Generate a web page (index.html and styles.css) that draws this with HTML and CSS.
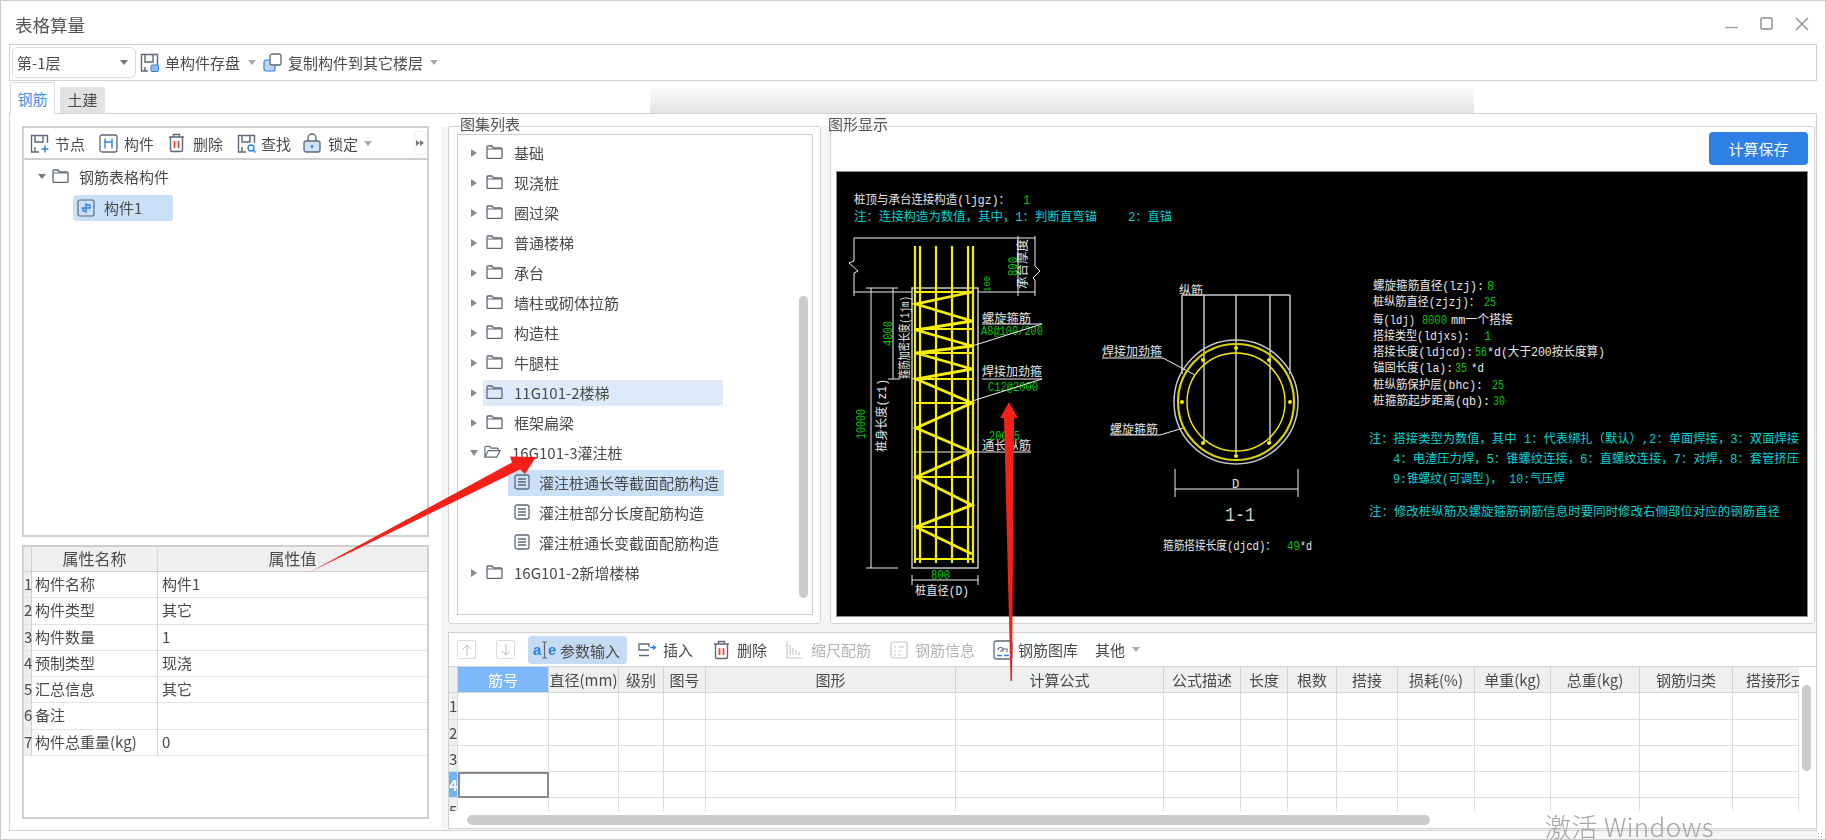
FILE: index.html
```html
<!DOCTYPE html>
<html lang="zh-CN">
<head>
<meta charset="utf-8">
<title>表格算量</title>
<link rel="stylesheet" href="styles.css">
</head>
<body>
<svg class="defs" width="0" height="0" aria-hidden="true">
  <symbol id="folder" viewBox="0 0 17 14"><path d="M1 3V2a1 1 0 0 1 1-1h4l1.5 2H15a1 1 0 0 1 1 1v8.500a1 1 0 0 1-1 1H2a1 1 0 0 1-1-1z" fill="none" stroke="#5f6877" stroke-width="1.300"/><path d="M1 4h15" stroke="#5f6877" stroke-width="1"/></symbol>
  <symbol id="folderopen" viewBox="0 0 18 14"><path d="M1 12.500V2a1 1 0 0 1 1-1h4l1.500 2H14a1 1 0 0 1 1 1v1.500M1 12.500h12.500L17 5.500H4.500z" fill="none" stroke="#5f6877" stroke-width="1.300"/></symbol>
  <symbol id="doc" viewBox="0 0 16 16"><rect x="1" y="1" width="14" height="14" rx="2" fill="none" stroke="#5f6877" stroke-width="1.300"/><path d="M4 5h8M4 8h8M4 11h8" stroke="#5f6877" stroke-width="1.300"/></symbol>
  <symbol id="trash" viewBox="0 0 17 20"><path d="M1 4h15M5.500 4V1.500h6V4M2.500 4v13a1.500 1.500 0 0 0 1.500 1.500h9a1.500 1.500 0 0 0 1.500-1.500V4" fill="none" stroke="#5f6877" stroke-width="1.400"/><path d="M6.500 8v7M10.500 8v7" stroke="#e8483f" stroke-width="1.800"/></symbol>
</svg>

<div class="win">
  <header class="title">
    <span class="title-text">表格算量</span>
    <div class="winbtns">
      <svg width="13" height="14" viewBox="0 0 13 14"><path d="M0 10.500h13" stroke="#9a9a9a" stroke-width="1.300"/></svg>
      <svg width="13" height="14" viewBox="0 0 13 14"><rect x="1" y="1" width="11" height="11" rx="1" fill="none" stroke="#8a8a8a" stroke-width="1.400"/></svg>
      <svg width="14" height="14" viewBox="0 0 14 14"><path d="M1 1l12 12M13 1L1 13" stroke="#8a8a8a" stroke-width="1.300"/></svg>
    </div>
  </header>

  <div class="topbar">
    <div class="combo"><span>第-1层</span><i class="caret dark"></i></div>
    <svg class="ico save" width="19" height="19" viewBox="0 0 19 19"><path d="M8 18H1.500V1.500h16V12M5 1.500V9h8V1.500M5 18v-4" fill="none" stroke="#5f6877" stroke-width="1.400"/><rect x="11" y="12" width="7.500" height="6.500" rx="1" fill="#8fbdf0" stroke="#2f80e4"/></svg>
    <span class="tb-text">单构件存盘</span><i class="caret mar1"></i>
    <svg class="ico copy" width="19" height="19" viewBox="0 0 19 19"><rect x="1" y="7" width="11" height="11" rx="2" fill="#bcd7f6" stroke="#2f80e4" stroke-width="1.200"/><rect x="7" y="1" width="11" height="11" rx="2" fill="#fff" stroke="#5f6877" stroke-width="1.300"/></svg>
    <span class="tb-text">复制构件到其它楼层</span><i class="caret mar2"></i>
  </div>

  <div class="tabs">
    <div class="tab active">钢筋</div>
    <div class="tab">土建</div>
  </div>

  <main class="main">
    <section class="left">
      <div class="ltools">
        <svg class="l1" width="19" height="19" viewBox="0 0 19 19"><path d="M9 18H1.500V1.500h16V9M5 1.500V8h8V1.500M5 18v-5" fill="none" stroke="#5f6877" stroke-width="1.400"/><path d="M15 11.500v7M11.500 15h7" stroke="#2f80e4" stroke-width="1.500"/></svg>
        <span class="lt">节点</span>
        <svg class="l2" width="19" height="19" viewBox="0 0 19 19"><rect x="1" y="1" width="17" height="17" rx="2" fill="none" stroke="#5f6877" stroke-width="1.300"/><path d="M6 4.500v10M13 4.500v10M6 8h7" fill="none" stroke="#2f80e4" stroke-width="1.400"/></svg>
        <span class="lt">构件</span>
        <svg class="l3" width="17" height="20" viewBox="0 0 17 20"><use href="#trash"/></svg>
        <span class="lt t3">删除</span>
        <svg class="l4" width="19" height="19" viewBox="0 0 19 19"><path d="M9 18H1.500V1.500h16V9M5 1.500V8h8V1.500M5 18v-5" fill="none" stroke="#5f6877" stroke-width="1.400"/><circle cx="14" cy="14" r="3" fill="none" stroke="#2f80e4" stroke-width="1.400"/><path d="M16 16l2.500 2.500" stroke="#2f80e4" stroke-width="1.400"/></svg>
        <span class="lt t4">查找</span>
        <svg class="l5" width="18" height="20" viewBox="0 0 18 20"><path d="M5 8V5a4 4 0 0 1 8 0v3" fill="none" stroke="#5f6877" stroke-width="1.400"/><rect x="1" y="8" width="16" height="11" rx="2" fill="#cfe2f8" stroke="#5f6877" stroke-width="1.300"/><path d="M9 12v3" stroke="#2f80e4" stroke-width="2"/></svg>
        <span class="lt t5">锁定</span>
        <i class="caret"></i>
        <span class="more"><i></i><i></i></span>
      </div>
      <div class="ltree">
        <div class="lroot">
          <i class="caret dark"></i>
          <svg class="folder" width="17" height="14"><use href="#folder"/></svg>
          <span>钢筋表格构件</span>
        </div>
        <div class="litem">
          <svg width="18" height="18" viewBox="0 0 18 18"><rect x="1" y="1" width="16" height="16" rx="2" fill="none" stroke="#5f6877" stroke-width="1.200"/><path d="M9 4v10M4.500 9H9m0-3h4v3H9m-3 0v3h3" fill="none" stroke="#2f80e4" stroke-width="1.300"/></svg>
          <span>构件1</span>
        </div>
      </div>
      <div class="props">
        <div class="prow phead"><span class="pn"></span><span class="pa">属性名称</span><span class="pb">属性值</span></div>
        <div class="prow"><span class="pn">1</span><span class="pa">构件名称</span><span class="pb">构件1</span></div>
        <div class="prow"><span class="pn">2</span><span class="pa">构件类型</span><span class="pb">其它</span></div>
        <div class="prow"><span class="pn">3</span><span class="pa">构件数量</span><span class="pb">1</span></div>
        <div class="prow"><span class="pn">4</span><span class="pa">预制类型</span><span class="pb">现浇</span></div>
        <div class="prow"><span class="pn">5</span><span class="pa">汇总信息</span><span class="pb">其它</span></div>
        <div class="prow"><span class="pn">6</span><span class="pa">备注</span><span class="pb"></span></div>
        <div class="prow"><span class="pn">7</span><span class="pa">构件总重量(kg)</span><span class="pb">0</span></div>
      </div>
    </section>

    <section class="right">
      <div class="upper">
        <div class="group g-list">
          <span class="legend">图集列表</span>
          <div class="atree">
            <div class="trow"><i class="tri"></i><div class="lbl"><svg width="17" height="14"><use href="#folder"/></svg>基础</div></div>
            <div class="trow"><i class="tri"></i><div class="lbl"><svg width="17" height="14"><use href="#folder"/></svg>现浇桩</div></div>
            <div class="trow"><i class="tri"></i><div class="lbl"><svg width="17" height="14"><use href="#folder"/></svg>圈过梁</div></div>
            <div class="trow"><i class="tri"></i><div class="lbl"><svg width="17" height="14"><use href="#folder"/></svg>普通楼梯</div></div>
            <div class="trow"><i class="tri"></i><div class="lbl"><svg width="17" height="14"><use href="#folder"/></svg>承台</div></div>
            <div class="trow"><i class="tri"></i><div class="lbl"><svg width="17" height="14"><use href="#folder"/></svg>墙柱或砌体拉筋</div></div>
            <div class="trow"><i class="tri"></i><div class="lbl"><svg width="17" height="14"><use href="#folder"/></svg>构造柱</div></div>
            <div class="trow"><i class="tri"></i><div class="lbl"><svg width="17" height="14"><use href="#folder"/></svg>牛腿柱</div></div>
            <div class="trow"><i class="tri"></i><div class="lbl hl"><svg width="17" height="14"><use href="#folder"/></svg>11G101-2楼梯</div></div>
            <div class="trow"><i class="tri"></i><div class="lbl"><svg width="17" height="14"><use href="#folder"/></svg>框架扁梁</div></div>
            <div class="trow"><i class="tri open"></i><div class="lbl"><svg width="17" height="14" viewBox="0 0 18 14"><use href="#folderopen"/></svg>16G101-3灌注桩</div></div>
            <div class="trow"><div class="lbl child sel"><svg width="16" height="16"><use href="#doc"/></svg>灌注桩通长等截面配筋构造</div></div>
            <div class="trow"><div class="lbl child"><svg width="16" height="16"><use href="#doc"/></svg>灌注桩部分长度配筋构造</div></div>
            <div class="trow"><div class="lbl child"><svg width="16" height="16"><use href="#doc"/></svg>灌注桩通长变截面配筋构造</div></div>
            <div class="trow"><i class="tri"></i><div class="lbl"><svg width="17" height="14"><use href="#folder"/></svg>16G101-2新增楼梯</div></div>
            <span class="vscroll"></span>
          </div>
        </div>
        <div class="group g-view">
          <span class="legend">图形显示</span>
          <div class="view-bar"><button class="calc">计算保存</button></div>
          <div class="canvas">
            <svg class="cad" width="970" height="443" viewBox="837 173 970 443">
              <g class="w">
                <text x="854" y="205" textLength="156" lengthAdjust="spacingAndGlyphs">桩顶与承台连接构造(ljgz)&#xFF1A;</text>
                <text x="982" y="324" textLength="49" lengthAdjust="spacingAndGlyphs">螺旋箍筋</text>
                <text x="982" y="377" textLength="60" lengthAdjust="spacingAndGlyphs">焊接加劲箍</text>
                <text x="982" y="451" textLength="49" lengthAdjust="spacingAndGlyphs">通长纵筋</text>
                <text x="915" y="596" textLength="54" lengthAdjust="spacingAndGlyphs">桩直径(D)</text>
                <text transform="translate(1027 290) rotate(-90)" textLength="50" lengthAdjust="spacingAndGlyphs">承台厚度</text>
                <text transform="translate(909 380) rotate(-90)" textLength="83" lengthAdjust="spacingAndGlyphs">箍筋加密长度(1jm)</text>
                <text transform="translate(886 453) rotate(-90)" textLength="73" lengthAdjust="spacingAndGlyphs">桩身长度(z1)</text>
                <text x="1179" y="296" textLength="24" lengthAdjust="spacingAndGlyphs">纵筋</text>
                <text x="1102" y="357" textLength="60" lengthAdjust="spacingAndGlyphs">焊接加劲箍</text>
                <text x="1110" y="435" textLength="48" lengthAdjust="spacingAndGlyphs">螺旋箍筋</text>
                <text x="1232" y="489">D</text>
                <text x="1225" y="522" class="big" textLength="30" lengthAdjust="spacingAndGlyphs">1-1</text>
                <text x="1163" y="551" textLength="113" lengthAdjust="spacingAndGlyphs">箍筋搭接长度(djcd)&#xFF1A;</text>
                <text x="1300" y="551" textLength="12" lengthAdjust="spacingAndGlyphs">*d</text>

                <text x="1373" y="291" textLength="111" lengthAdjust="spacingAndGlyphs">螺旋箍筋直径(lzj):</text>
                <text x="1373" y="307" textLength="107" lengthAdjust="spacingAndGlyphs">桩纵筋直径(zjzj)&#xFF1A;</text>
                <text x="1373" y="325" textLength="42" lengthAdjust="spacingAndGlyphs">每(ldj)</text>
                <text x="1451" y="325" textLength="62" lengthAdjust="spacingAndGlyphs">mm一个搭接</text>
                <text x="1373" y="341" textLength="97" lengthAdjust="spacingAndGlyphs">搭接类型(ldjxs):</text>
                <text x="1373" y="357" textLength="100" lengthAdjust="spacingAndGlyphs">搭接长度(ldjcd):</text>
                <text x="1487" y="357" textLength="118" lengthAdjust="spacingAndGlyphs">*d(大于200按长度算)</text>
                <text x="1373" y="373" textLength="80" lengthAdjust="spacingAndGlyphs">锚固长度(la):</text>
                <text x="1471" y="373" textLength="13" lengthAdjust="spacingAndGlyphs">*d</text>
                <text x="1373" y="390" textLength="110" lengthAdjust="spacingAndGlyphs">桩纵筋保护层(bhc):</text>
                <text x="1373" y="406" textLength="117" lengthAdjust="spacingAndGlyphs">桩箍筋起步距离(qb):</text>
              </g>
              <g class="c">
                <text x="854" y="222" textLength="243" lengthAdjust="spacingAndGlyphs">注&#xFF1A;连接构造为数值&#xFF0C;其中&#xFF0C;1&#xFF1A;判断直弯锚</text>
                <text x="1128" y="222" textLength="44" lengthAdjust="spacingAndGlyphs">2&#xFF1A;直锚</text>
                <text x="1369" y="444" textLength="430" lengthAdjust="spacingAndGlyphs">注&#xFF1A;搭接类型为数值&#xFF0C;其中 1&#xFF1A;代表绑扎&#xFF08;默认&#xFF09;,2&#xFF1A;单面焊接&#xFF0C;3&#xFF1A;双面焊接</text>
                <text x="1393" y="464" textLength="406" lengthAdjust="spacingAndGlyphs">4&#xFF1A;电渣压力焊&#xFF0C;5&#xFF1A;锥螺纹连接&#xFF0C;6&#xFF1A;直螺纹连接&#xFF0C;7&#xFF1A;对焊&#xFF0C;8&#xFF1A;套管挤压</text>
                <text x="1393" y="484" textLength="172" lengthAdjust="spacingAndGlyphs">9:锥螺纹(可调型)&#xFF0C; 10:气压焊</text>
                <text x="1369" y="517" textLength="411" lengthAdjust="spacingAndGlyphs">注&#xFF1A;修改桩纵筋及螺旋箍筋钢筋信息时要同时修改右侧部位对应的钢筋直径</text>
              </g>
              <g class="g">
                <text x="1023" y="205">1</text>
                <text transform="translate(1017 277) rotate(-90)" textLength="19" lengthAdjust="spacingAndGlyphs">800</text>
                <text transform="translate(990 293) rotate(-90)" class="small">100</text>
                <text transform="translate(892 347) rotate(-90)" textLength="25" lengthAdjust="spacingAndGlyphs">4000</text>
                <text transform="translate(865 440) rotate(-90)" textLength="30" lengthAdjust="spacingAndGlyphs">10000</text>
                <text x="981" y="336" textLength="62" lengthAdjust="spacingAndGlyphs">A8@100/200</text>
                <text x="988" y="392" textLength="50" lengthAdjust="spacingAndGlyphs">C12@2000</text>
                <text x="989" y="441" textLength="31" lengthAdjust="spacingAndGlyphs">20C25</text>
                <text x="931" y="580" textLength="19" lengthAdjust="spacingAndGlyphs">800</text>
                <text x="1287" y="551" textLength="13" lengthAdjust="spacingAndGlyphs">49</text>
                <text x="1487" y="291">8</text>
                <text x="1484" y="307" textLength="12" lengthAdjust="spacingAndGlyphs">25</text>
                <text x="1422" y="325" textLength="25" lengthAdjust="spacingAndGlyphs">8000</text>
                <text x="1484" y="341">1</text>
                <text x="1475" y="357" textLength="12" lengthAdjust="spacingAndGlyphs">56</text>
                <text x="1455" y="373" textLength="12" lengthAdjust="spacingAndGlyphs">35</text>
                <text x="1492" y="390" textLength="12" lengthAdjust="spacingAndGlyphs">25</text>
                <text x="1493" y="406" textLength="12" lengthAdjust="spacingAndGlyphs">30</text>
              </g>
              <g class="ln">
                <path d="M854 239H1035M854 239V262L849 264L858 272L854 274V297M854 293H912M978 293H1035M1035 237V267L1040 272L1033 279L1035 281V297M1018 237V297M871 289V569M893 289V380M866 569H898M866 289H898M888 380H900"/>
                <path d="M912 289H978V569H912Z" class="gy"/>
                <path d="M982 325H1042L972 347M982 380H1042L966 404M916 453H1031M912 581H978M912 576V586M978 576V586"/>
                <path d="M1182 296H1290M1182 296V375M1204 296V445M1236 296V455M1270 296V445M1290 296V375" class="gy"/>
                <path d="M1102 359H1163L1195 376M1110 436H1160L1183 429M1175 490H1298M1175 470V498M1298 470V498"/>
                <circle cx="1236" cy="403" r="62" class="gy"/>
              </g>
              <g class="yl">
                <path class="bar" d="M915 247V564M920 247V564M936 247V564M952 247V564M968 247V564M973 247V564"/>
                <path d="M915 293H973M915 330H973M915 354H973M915 380H973M915 404H973M915 478H973M915 528H973M915 560H973"/>
                <path class="zig" d="M972 293L916 305L972 322L916 331L972 347L916 354L972 370L916 380L972 404L916 429L972 453L916 478L972 506L916 528L972 555"/>
                <circle cx="1236" cy="403" r="58" class="ring"/>
                <circle cx="1236" cy="403" r="49" class="inner"/>
              </g>
              <g class="dots">
                <circle cx="1236" cy="349" r="2"/><circle cx="1236" cy="457" r="2"/><circle cx="1182" cy="403" r="2"/><circle cx="1290" cy="403" r="2"/><circle cx="1203" cy="361" r="2"/><circle cx="1269" cy="361" r="2"/><circle cx="1203" cy="444" r="2"/><circle cx="1269" cy="444" r="2"/>
              </g>
            </svg>
          </div>
        </div>
      </div>

      <div class="lower">
        <div class="btools">
          <span class="sq"><svg width="10" height="12" viewBox="0 0 10 12"><path d="M5 12V1M1 5l4-4 4 4" fill="none" stroke="#bbb"/></svg></span>
          <span class="sq sq2"><svg width="10" height="12" viewBox="0 0 10 12"><path d="M5 0v11M1 7l4 4 4-4" fill="none" stroke="#bbb"/></svg></span>
          <span class="param">
            <svg width="24" height="20" viewBox="0 0 24 20"><text x="0" y="15" class="ae">a</text><text x="15" y="15" class="ae">e</text><path d="M9 2h2.500M14 2h-2.500M9 18h2.500M14 18h-2.500M11.500 2v16" fill="none" stroke="#5f6877" stroke-width="1.200"/></svg>
            参数输入
          </span>
          <svg class="b-ins" width="19" height="14" viewBox="0 0 19 14"><path d="M11 4V1H1v6h10M1 12.500h10" fill="none" stroke="#5f6877" stroke-width="1.300"/><path d="M12 4.500h5M15 2.500l2.500 2-2.500 2" fill="none" stroke="#2f80e4" stroke-width="1.300"/></svg>
          <span class="bt">插入</span>
          <svg class="b-del" width="17" height="20" viewBox="0 0 17 20"><use href="#trash"/></svg>
          <span class="bt">删除</span>
          <svg class="b-scale" width="17" height="20" viewBox="0 0 17 20"><path d="M1 1v17h15M4 5v10M7 8v7M10 10v5M13 12v3" fill="none" stroke="#c6c6c6" stroke-width="1.200"/></svg>
          <span class="bt off">缩尺配筋</span>
          <svg class="b-info" width="18" height="18" viewBox="0 0 18 18"><rect x="1" y="1" width="16" height="16" rx="2" fill="none" stroke="#c6c6c6" stroke-width="1.200"/><path d="M4 6h2M8 6h6M4 10h2M8 10h4M4 14h2M8 14h3" stroke="#c6c6c6"/></svg>
          <span class="bt off">钢筋信息</span>
          <svg class="b-lib" width="20" height="20" viewBox="0 0 20 20"><rect x="1" y="1" width="18" height="18" rx="2" fill="none" stroke="#5f6877" stroke-width="1.300"/><path d="M5 10a2.500 2.500 0 0 1 5 0v1H7M10 9h4v3" fill="none" stroke="#5f6877" stroke-width="1.100"/><path d="M4 15.500h5M11 15.500h5" stroke="#2f80e4" stroke-width="1.300"/></svg>
          <span class="bt">钢筋图库</span>
          <span class="bt other">其他</span><i class="caret mar4"></i>
        </div>
        <div class="bgrid">
          <span class="gh"></span><span class="gh act">筋号</span><span class="gh">直径(mm)</span><span class="gh">级别</span><span class="gh">图号</span><span class="gh">图形</span><span class="gh">计算公式</span><span class="gh">公式描述</span><span class="gh">长度</span><span class="gh">根数</span><span class="gh">搭接</span><span class="gh">损耗(%)</span><span class="gh">单重(kg)</span><span class="gh">总重(kg)</span><span class="gh">钢筋归类</span><span class="gh clip">搭接形式</span>
          <span class="rh">1</span><s></s><s></s><s></s><s></s><s></s><s></s><s></s><s></s><s></s><s></s><s></s><s></s><s></s><s></s><s></s>
          <span class="rh">2</span><s></s><s></s><s></s><s></s><s></s><s></s><s></s><s></s><s></s><s></s><s></s><s></s><s></s><s></s><s></s>
          <span class="rh">3</span><s></s><s></s><s></s><s></s><s></s><s></s><s></s><s></s><s></s><s></s><s></s><s></s><s></s><s></s><s></s>
          <span class="rh cur">4</span><s class="cursor"></s><s></s><s></s><s></s><s></s><s></s><s></s><s></s><s></s><s></s><s></s><s></s><s></s><s></s><s></s>
          <span class="rh">5</span><s></s><s></s><s></s><s></s><s></s><s></s><s></s><s></s><s></s><s></s><s></s><s></s><s></s><s></s><s></s>
        </div>
        <div class="hscroll"><span></span></div>
        <span class="gridv"></span>
      </div>
    </section>
  </main>

  <footer class="foot"><span class="grip"></span></footer>

  <span class="watermark">激活 Windows</span>
  <svg class="arrows" width="1826" height="840" viewBox="0 0 1826 840">
    <path d="M310 572L512 462.500L510 456.500L536 457L525 474L520 469.500Z" fill="#f5201a"/>
    <path d="M1010.500 681L1004 418H1000L1009 402L1018 418H1014L1012 681Z" fill="#f5201a"/>
  </svg>
</div>
</body>
</html>
```

FILE: styles.css
```css
* { box-sizing: border-box; }
html, body { margin: 0; height: 840px; overflow: hidden; background: #fff; }
body { font-family: "Noto Sans CJK SC", "Liberation Sans", sans-serif; font-size: 15px; color: #4a4a4a; }
.defs { position: absolute; }
svg { flex: none; display: block; }

.win { position: relative; width: 1826px; height: 840px; border: 1px solid #c9c9c9; padding: 0 8px; display: flex; flex-direction: column; filter: blur(.3px); }

.title { height: 43px; display: flex; align-items: center; padding: 4px 6px 0 6px; flex: none; }
.title-text { font-size: 17.5px; color: #555; }
.winbtns { margin-left: auto; display: flex; gap: 22px; margin-right: 2px; margin-top: -2px; }

.topbar { height: 37px; flex: none; border: 1px solid #cdd2d8; display: flex; align-items: center; padding-left: 2px; }
.combo { width: 124px; height: 31px; border: 1px solid #dcdcdc; border-radius: 5px; display: flex; align-items: center; padding: 0 7px 0 4px; justify-content: space-between; }
.caret { display: block; width: 0; height: 0; border: 4px solid transparent; border-top: 5px solid #aaa; border-bottom: 0; flex: none; }
.caret.dark { border-top-color: #777; }
.tb-text { font-size: 15px; }
.ico.save { margin: 0 6px 0 4px; }
.ico.copy { margin: 0 6px 0 7px; }
.mar1 { margin-left: 8px; }
.mar2 { margin-left: 7px; }

.tabs { height: 32px; flex: none; display: flex; align-items: flex-end; gap: 5px; padding-left: 1px; background: linear-gradient(#fdfdfd, #e3e3e3) 641px 5px / 824px 27px no-repeat; }
.tab { width: 45px; height: 26px; background: #e2e2e2; text-align: center; line-height: 25px; font-size: 15px; border-radius: 2px 2px 0 0; }
.tab.active { height: 32px; margin-bottom: -1px; background: #fff; color: #3f93ea; border: 1px solid #d5d8dc; border-bottom: 0; line-height: 31px; position: relative; z-index: 1; }

.main { height: 718px; flex: none; border: 1px solid #cdd2d8; display: grid; grid-template-columns: 407px 1fr; column-gap: 12px; padding-left: 12px; }

.left { padding-top: 12px; display: flex; flex-direction: column; }
.ltools { height: 34px; flex: none; border: 2px solid #cfcfcf; display: flex; align-items: center; font-size: 15px; padding-left: 6px; }
.lt { margin-left: 6px; margin-right: 14px; }
.lt.t3 { margin-left: 8px; margin-right: 14px; }
.lt.t4 { margin-left: 5px; margin-right: 12px; }
.lt.t5 { margin-left: 7px; margin-right: 6px; }
.more { margin-left: auto; margin-right: 1px; width: 12px; height: 24px; border: 1px solid #eee; border-radius: 3px; display: flex; align-items: center; justify-content: center; }
.more i { width: 0; height: 0; border: 3px solid transparent; border-left: 4px solid #777; border-right: 0; }
.ltree { height: 377px; flex: none; border: 2px solid #cfcfcf; border-top: 0; padding-top: 1px; }
.lroot { display: flex; align-items: center; height: 30px; padding-left: 14px; }
.lroot .folder { margin: 0 10px 0 6px; }
.litem { margin-left: 49px; width: 100px; height: 26px; background: #c9e0f8; border-radius: 3px; display: flex; align-items: center; padding: 0 0 2px 4px; gap: 9px; margin-top: 4px; }
.litem svg { margin-top: 2px; }
.props { margin-top: 8px; height: 274px; flex: none; border: 2px solid #cfcfcf; }
.prow { display: grid; grid-template-columns: 8px 126px 1fr; height: 26.300px; border-bottom: 1px solid #e2e2e2; line-height: 23px; }
.pn { background: #eee; border-right: 1px solid #cfcfcf; font-size: 15px; }
.pa { padding-left: 3px; border-right: 1px solid #d8d8d8; white-space: nowrap; }
.pb { padding-left: 4px; }
.phead { background: #efefef; border-bottom: 1px solid #cfcfcf; height: 25px; font-size: 16px; }
.phead .pa, .phead .pb { text-align: center; padding: 0; }

.right { background: linear-gradient(#fff 12px, #f5f5f5 12px); padding: 12px 0 0 7px; }
.upper { display: flex; gap: 9px; height: 498px; }
.group { position: relative; border: 1px solid #d4d4d4; border-radius: 3px; background: #fff; }
.legend { position: absolute; top: -13px; left: 11px; font-size: 15px; line-height: 20px; color: #555; }
.g-list { width: 373px; padding: 7px 7px 8px 8px; flex: none; }
.g-view { flex: 1; margin-right: 1px; padding: 5px 6px 6px 5px; display: flex; flex-direction: column; }
.g-view .legend { left: -3px; }
.atree { position: relative; height: 481px; border: 1px solid #ccc; padding-top: 3px; }
.trow { height: 30px; display: flex; align-items: center; padding-left: 13px; }
.tri { display: block; width: 0; height: 0; border: 4.500px solid transparent; border-left: 6px solid #8a8a8a; border-right: 0; margin-right: 6px; flex: none; }
.tri.open { border: 4.500px solid transparent; border-top: 6px solid #8a8a8a; border-bottom: 0; margin-right: 3px; margin-left: -1px; }
.lbl { width: 240px; height: 26px; display: flex; align-items: center; padding: 0 0 2px 3px; gap: 11px; white-space: nowrap; }
.lbl.hl { background: #deeafa; }
.lbl.child { margin-left: 37px; width: 216px; padding-left: 6px; gap: 9px; }
.lbl.sel { background: #c9e0f8; }
.vscroll { position: absolute; right: 4px; top: 161px; width: 9px; height: 302px; background: #cbcbcb; border-radius: 5px; }

.view-bar { display: flex; justify-content: flex-end; flex: none; }
.calc { width: 99px; height: 33px; background: #2f80e4; color: #f4f8fe; border: 0; border-radius: 4px; font: 15px "Noto Sans CJK SC", sans-serif; padding: 0; }
.canvas { margin-top: 6px; height: 446px; background: #000; border: 1px solid #8c8c8c; }
.cad { display: block; }
.cad text { font-family: "Liberation Mono", "Noto Sans CJK SC", monospace; font-size: 12px; }
.cad .w text { fill: #e8e8e8; }
.cad .c text { fill: #00d4d4; }
.cad .g text { fill: #00c800; }
.cad text.big { font-size: 20px; fill: #cfcfcf; }
.cad text.small { font-size: 9px; }
.ln path, .ln circle { fill: none; stroke: #f0f0f0; stroke-width: 1; }
.ln .gy { stroke: #c8c8c8; stroke-width: 1.500; }
.yl path, .yl circle { fill: none; stroke: #f6f000; stroke-width: 1.800; }
.yl .bar { stroke-width: 2.200; }
.yl .zig { stroke-width: 2.800; }
.yl .ring { stroke: #d8d000; stroke-width: 2.200; }
.yl .inner { stroke-width: 1.400; }
.dots circle { fill: #f6f000; }

.lower { position: relative; margin-top: 8px; height: 197px; background: #fff; border: 1px solid #d0d0d0; border-right: 0; }
.btools { height: 34px; display: flex; align-items: center; padding-left: 8px; border-bottom: 1px solid #d4d4d4; }
.sq { width: 19px; height: 19px; border: 1px solid #dcdcdc; border-radius: 2px; display: flex; align-items: center; justify-content: center; }
.sq2 { margin-left: 20px; }
.param { margin-left: 13px; width: 99px; height: 28px; background: #c5daf3; border-radius: 4px; display: flex; align-items: center; padding-left: 5px; gap: 3px; margin-top: 1px; }
.ae { font: bold 15px "Liberation Sans", sans-serif; fill: #2f80e4; }
.bt { white-space: nowrap; }
.bt.off { color: #b5b5b5; }
.b-ins { margin: 0 6px 0 11px; }
.b-del { margin: 0 7px 0 20px; }
.b-scale { margin: 0 8px 0 19px; }
.b-info { margin: 0 7px 0 19px; }
.b-lib { margin: 0 5px 0 18px; }
.other { margin-left: 17px; }
.mar4 { margin-left: 7px; }
.bgrid { height: 144px; width: 1350px; overflow: hidden; display: grid; grid-template-columns: 9px 91px 70px 45px 42px 250px 208px 77px 47px 49px 61px 77px 76px 89px 93px 66px; grid-auto-rows: 26.300px; }
.gh { background: #efefef; border-right: 1px solid #d4d4d4; border-bottom: 1px solid #d4d4d4; text-align: center; line-height: 26px; white-space: nowrap; overflow: hidden; height: 26px; }
.gh.act { background: #7db8fa; color: #fff; }
.gh.clip { text-align: left; padding-left: 13px; border-right: 0; }
.rh { background: #efefef; border-bottom: 1px solid #ddd; border-right: 1px solid #ddd; line-height: 26px; font-size: 15px; overflow: hidden; }
.rh.cur { background: #72b2f7; color: #fff; font-weight: 700; }
.bgrid s { border-right: 1px solid #dedede; border-bottom: 1px solid #dedede; }
.bgrid s.cursor { border: 2px solid #8a8a8a; }
.hscroll { padding: 4px 0 0 18px; }
.hscroll span { display: block; width: 963px; height: 10px; background: #cbcbcb; border-radius: 5px; }
.gridv { position: absolute; right: 5px; top: 52px; width: 9px; height: 86px; background: #cbcbcb; border-radius: 5px; }

.foot { flex: 1; position: relative; background: linear-gradient(90deg, #fff 1500px, #f4f4f4 1640px); }
.grip { position: absolute; right: -7px; top: 1px; width: 7px; height: 7px; background: radial-gradient(circle, #999 35%, transparent 40%) 0 0 / 3px 3px; }

.watermark { position: absolute; left: 1544px; top: 805px; font-size: 26px; line-height: 40px; font-weight: 300; letter-spacing: .4px; color: #a5a5a5; white-space: nowrap; }
.arrows { position: absolute; left: -1px; top: -1px; pointer-events: none; }
```
